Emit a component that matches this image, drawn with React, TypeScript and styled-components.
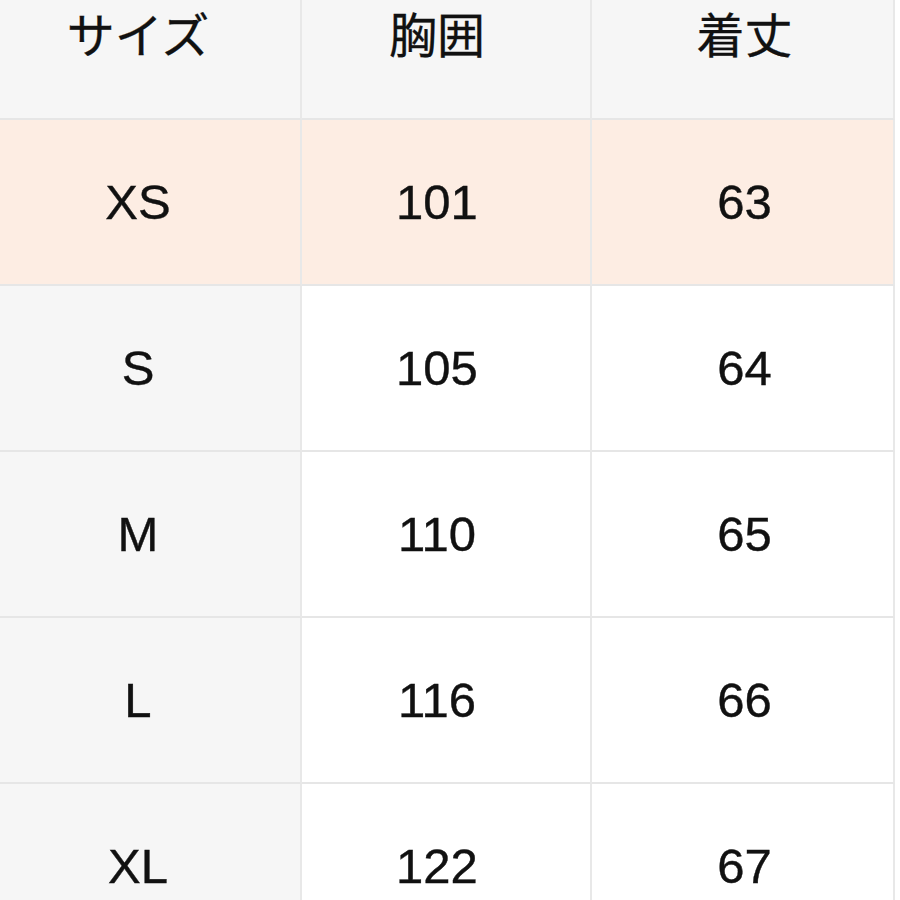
import styled, { createGlobalStyle, css } from "styled-components";

const GlobalStyle = createGlobalStyle`
  html, body {
    margin: 0;
    padding: 0;
    background: #ffffff;
  }
  body {
    font-family: "Liberation Sans", "Noto Sans CJK JP", Arial, sans-serif;
    color: #111111;
  }
`;

type Tone = "head" | "accent" | "side" | "plain";

const tones: Record<Tone, string> = {
  head: "#f6f6f6",
  accent: "#fdede3",
  side: "#f6f6f6",
  plain: "#ffffff",
};

const Table = styled.div`
  display: grid;
  grid-template-columns: 302px 290px 303px;
  grid-auto-rows: 166px;
  grid-template-rows: 120px;
  width: 895px;
  height: 900px;
  overflow: hidden;
`;

const Cell = styled.div<{ $tone: Tone; $col: number; $head?: boolean }>`
  display: flex;
  justify-content: center;
  align-items: ${({ $head }) => ($head ? "flex-start" : "center")};
  box-sizing: border-box;
  background: ${({ $tone }) => tones[$tone]};
  border-bottom: 2px solid #e6e6e6;
  border-right: 2px solid #e8e8e8;
  font-size: 49px;
  line-height: 1.2;
  letter-spacing: 0;
  -webkit-text-stroke: 0.4px #111111;
  ${({ $col }) =>
    $col === 0
      ? css`
          padding-right: 24px;
        `
      : $col === 1
      ? css`
          padding-right: 18px;
        `
      : css`
          padding-left: 4px;
        `}
  ${({ $head }) =>
    $head &&
    css`
      padding-top: 4px;
      font-family: "Noto Sans CJK JP", "Liberation Sans", sans-serif;
      font-size: 48px;
      -webkit-text-stroke: 0.3px #111111;
    `}
`;

const headers = ["サイズ", "胸囲", "着丈"];

const rows = [
  ["XS", "101", "63"],
  ["S", "105", "64"],
  ["M", "110", "65"],
  ["L", "116", "66"],
  ["XL", "122", "67"],
];

export default function App() {
  return (
    <>
      <GlobalStyle />
      <Table>
        {headers.map((h, i) => (
          <Cell key={h} $tone="head" $col={i} $head>
            {h}
          </Cell>
        ))}
        {rows.map((row, r) =>
          row.map((v, c) => (
            <Cell
              key={`${r}-${c}`}
              $col={c}
              $tone={r === 0 ? "accent" : c === 0 ? "side" : "plain"}
            >
              {v}
            </Cell>
          ))
        )}
      </Table>
    </>
  );
}
